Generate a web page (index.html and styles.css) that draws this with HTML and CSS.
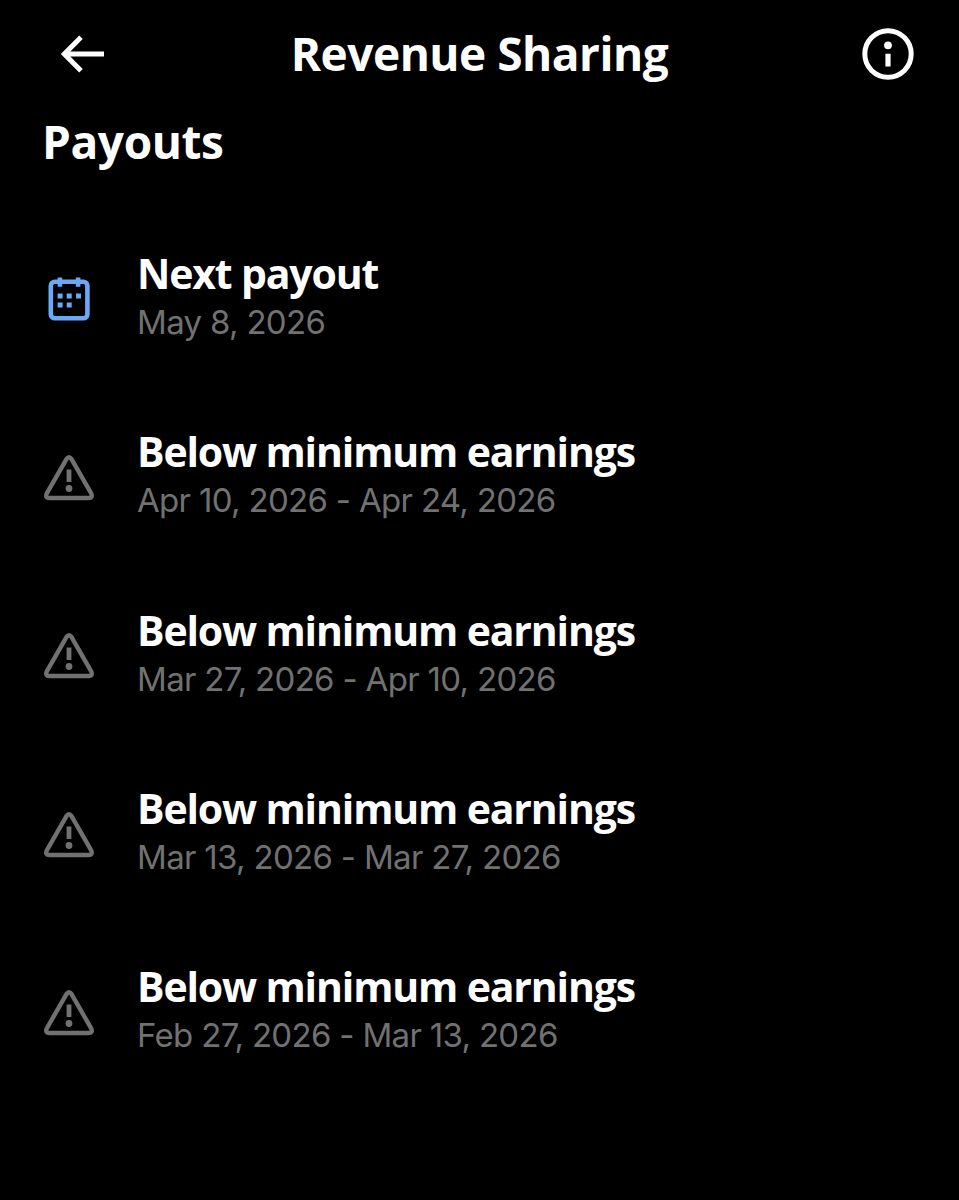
FILE: index.html
```
<!DOCTYPE html>
<html lang="en">

	<head>
		<meta charset="UTF-8">
		<title>Revenue Sharing</title>
		<link rel="stylesheet" href="styles.css">
	</head>

	<body>
		<svg class="defs" width="0" height="0">
			<symbol id="warning" viewBox="0 0 50 46">
				<path d="M22.6 3.9 2.8 38.4Q.9 43 5.4 43H44.6Q49.1 43 47.2 38.4L27.4 3.9Q25 .6 22.6 3.9Z" fill="none" stroke="currentColor" stroke-width="4.4" stroke-linejoin="round" />
				<path d="M22.6 14.5h4.8v12.6h-4.8z" fill="currentColor" />
				<circle cx="25" cy="33.5" r="3.4" fill="currentColor" />
			</symbol>
		</svg>

		<header class="header">
			<svg class="back" viewBox="0 0 44 38" width="44" height="38">
				<path d="M21 2.3 4.3 19 21 35.7M4.3 19H44" fill="none" stroke="currentColor" stroke-width="5" />
			</svg>
			<h1 class="title">Revenue Sharing</h1>
			<svg class="info" viewBox="0 0 52 52" width="52" height="52">
				<circle cx="26" cy="26" r="23.2" fill="none" stroke="currentColor" stroke-width="5" />
				<circle cx="26" cy="17.3" r="3.9" fill="currentColor" />
				<path d="M23.4 25.7h5.2v12.7h-5.2z" fill="currentColor" />
			</svg>
		</header>

		<main>
			<h2 class="heading">Payouts</h2>
			<ul class="list">
				<li class="item">
					<svg class="icon calendar" viewBox="0 0 50 46">
						<rect x="6.8" y="4.7" width="36.6" height="36.6" rx="4" fill="none" stroke="currentColor" stroke-width="4.6" />
						<path d="M13.6.4h4.6v9.4h-4.6zM31.8.4h4.6v9.4h-4.6zM13.6 16.4h5v5h-5zM22.7 16.4h5v5h-5zM32 16.4h5v5h-5zM13.6 25.6h5v5h-5zM22.7 25.6h5v5h-5z" fill="currentColor" />
					</svg>
					<div>
						<h3 class="name">Next payout</h3>
						<p class="date">May 8, 2026</p>
					</div>
				</li>
				<li class="item">
					<svg class="icon"><use href="#warning" /></svg>
					<div>
						<h3 class="name">Below minimum earnings</h3>
						<p class="date">Apr 10, 2026 - Apr 24, 2026</p>
					</div>
				</li>
				<li class="item">
					<svg class="icon"><use href="#warning" /></svg>
					<div>
						<h3 class="name">Below minimum earnings</h3>
						<p class="date">Mar 27, 2026 - Apr 10, 2026</p>
					</div>
				</li>
				<li class="item">
					<svg class="icon"><use href="#warning" /></svg>
					<div>
						<h3 class="name">Below minimum earnings</h3>
						<p class="date">Mar 13, 2026 - Mar 27, 2026</p>
					</div>
				</li>
				<li class="item">
					<svg class="icon"><use href="#warning" /></svg>
					<div>
						<h3 class="name">Below minimum earnings</h3>
						<p class="date">Feb 27, 2026 - Mar 13, 2026</p>
					</div>
				</li>
			</ul>
		</main>
	</body>

</html>
```

FILE: styles.css
```
* {
	margin: 0;
	padding: 0;
	box-sizing: border-box;
}

body {
	min-height: 1200px;
	background-color: #000;
	color: #fff;
	font-family: "Open Sans", "Liberation Sans", sans-serif;
}

.defs {
	display: block;
}

.header {
	display: flex;
	align-items: center;
	justify-content: space-between;
	height: 108px;
	padding: 0 45px 0 60px;
}

.title {
	margin: 0 7px 2px 0;
	font-size: 46px;
	line-height: 60px;
	font-weight: 700;
	letter-spacing: -0.5px;
}

.heading {
	padding: 3px 43px 0 42px;
	font-size: 46px;
	line-height: 60px;
	font-weight: 700;
	letter-spacing: -0.4px;
}

.list {
	padding-top: 37px;
	list-style: none;
}

.item {
	display: flex;
	align-items: center;
	gap: 43px;
	height: 178.3px;
	padding-left: 44px;
}

.icon {
	flex: none;
	width: 50px;
	height: 46px;
	margin-top: 5px;
	color: #717171;
}

.calendar {
	color: #6aa8f8;
}

.name {
	font-size: 41px;
	line-height: 50px;
	font-weight: 700;
	letter-spacing: -1.15px;
}

.date {
	font-family: Inter, "Liberation Sans", sans-serif;
	font-size: 33px;
	line-height: 48px;
	letter-spacing: -0.68px;
	color: #717171;
}
```
